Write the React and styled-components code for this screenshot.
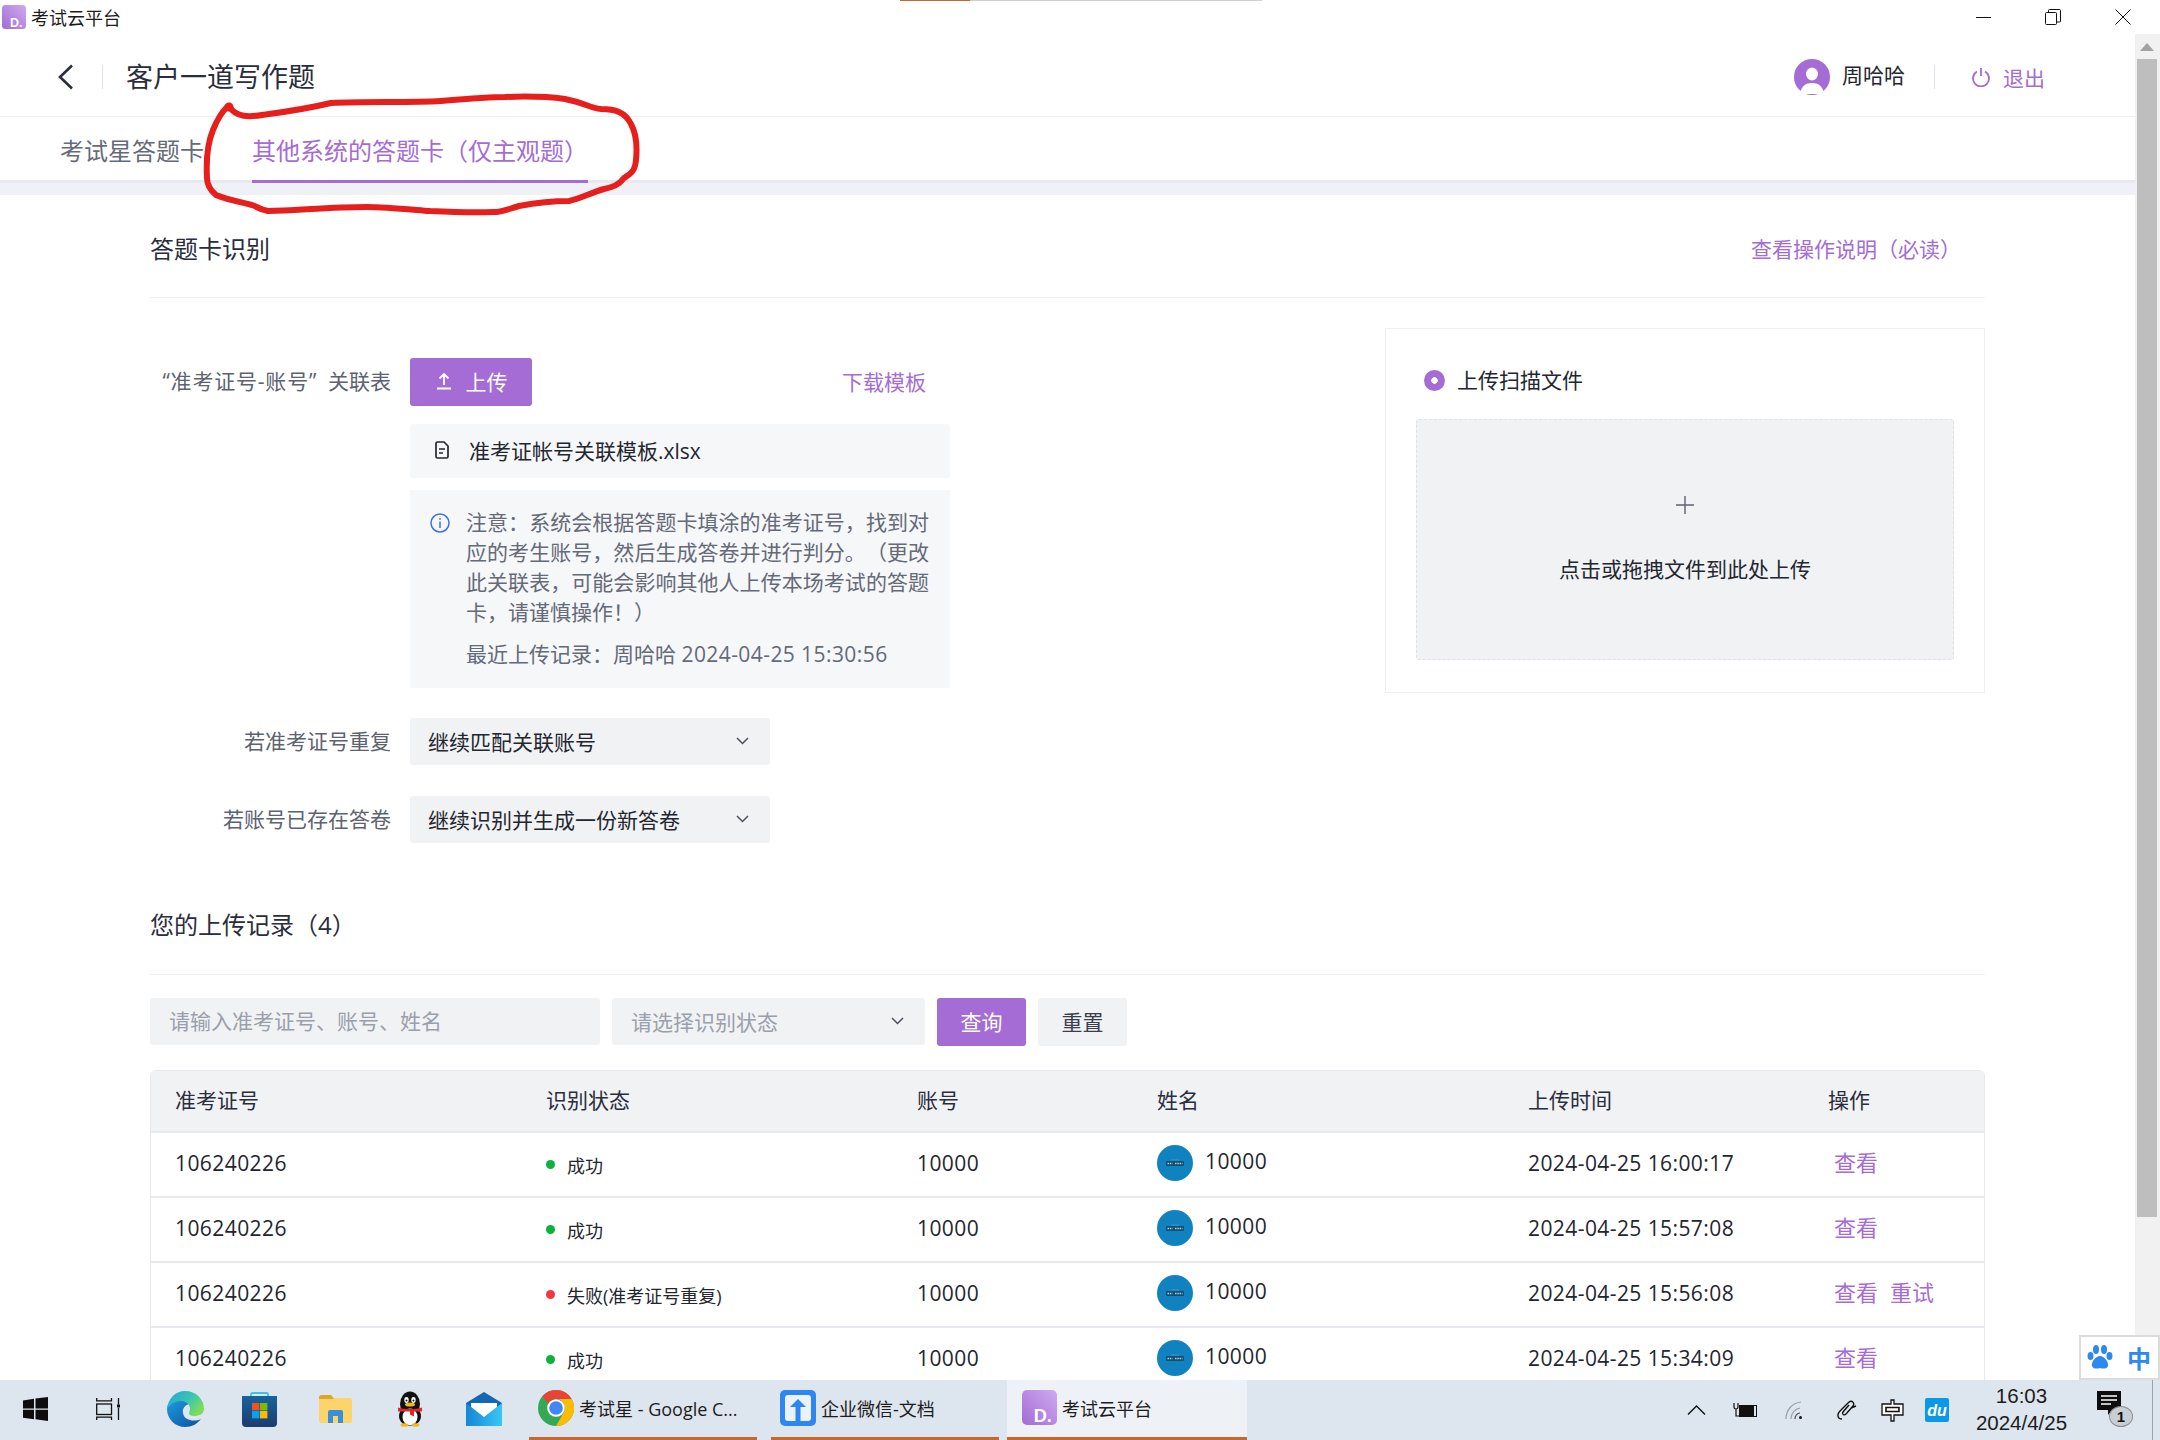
import React from "react";
import styled, { createGlobalStyle } from "styled-components";

const PURPLE = "#a46cd4";
const FONT = `"Open Sans", "Noto Sans CJK SC", sans-serif`;

const Global = createGlobalStyle`
  html, body { margin: 0; padding: 0; background: #fff; overflow: hidden; }
  * { box-sizing: border-box; text-spacing-trim: space-all; }
`;

const Screen = styled.div`
  position: relative; width: 2160px; height: 1440px; overflow: hidden;
  display: flex; flex-direction: column; background: #fff;
  font-family: ${FONT}; font-size: 21px; color: #23262f;
`;
const TitleBar = styled.div`
  height: 34px; flex: none; display: flex; align-items: center; padding-left: 2px; gap: 5px;
  font-size: 18px; color: #1c1c1c; position: relative;
`;
const WinButtons = styled.div`
  margin-left: auto; display: flex; align-items: center; gap: 54px; padding-right: 29px; height: 34px;
`;
const Body = styled.div`flex: 1; min-height: 0; display: flex;`;
const Page = styled.div`flex: 1; min-width: 0; overflow: hidden; display: flex; flex-direction: column;`;
const Scrollbar = styled.div`
  width: 25px; flex: none; background: #f1f1f1; padding: 0 3px 0 2px; display: flex; flex-direction: column;
`;
const ScrollArrow = styled.div`
  height: 25px; display: flex; align-items: center; justify-content: center;
`;
const ScrollThumb = styled.div`height: 1158px; background: #bebebe;`;

const Header = styled.header`
  height: 83px; flex: none; border-bottom: 1px solid #eeeff5; display: flex; align-items: center;
  padding: 3px 90px 0 57px;
`;
const BackBtn = styled.div`width: 17px; height: 26px; display: flex;`;
const VLine = styled.div`width: 1px; height: 24px; background: #dfe1e6;`;
const HeadDivider = styled(VLine)`margin-left: 28px;`;
const PageTitle = styled.h1`
  margin: 0 0 0 23px; font-size: 27px; font-weight: 400; color: #2a2d3c; line-height: 36px;
`;
const UserBox = styled.div`margin-left: auto; display: flex; align-items: center;`;
const UserName = styled.span`margin-left: 12px; margin-bottom: 5px; color: #23262f;`;
const UserDivider = styled(VLine)`margin: 0 37px 0 29px;`;
const Logout = styled.span`display: flex; align-items: center; gap: 13px; color: ${PURPLE};`;

const Tabs = styled.nav`
  height: 66px; flex: none; display: flex; padding-left: 60px; gap: 48px;
  border-bottom: 3px solid #e8e9ee;
`;
const Tab = styled.div`
  height: 66px; font-size: 24px; line-height: 68px; color: ${p => (p.$active ? PURPLE : "#666b78")};
  border-bottom: 3px solid ${p => (p.$active ? PURPLE : "transparent")}; white-space: nowrap;
`;
const Band = styled.div`height: 12px; flex: none; background: #f0f1f7;`;

const Content = styled.main`padding: 0 150px; flex: 1;`;
const SectionHead = styled.div`
  display: flex; align-items: center; justify-content: space-between;
  height: 103px; padding: 6px 24px 0 0; border-bottom: 1px solid #f0f1f5;
`;
const SectionTitle = styled.h2`margin: 0; font-size: 24px; font-weight: 400; color: #2a2d3c; line-height: 32px;`;
const RecordsTitle = styled(SectionTitle)`line-height: 30px;`;
const TextLink = styled.a`color: ${PURPLE}; white-space: nowrap; padding-bottom: 2px;`;

const FormRow = styled.div`display: flex; justify-content: space-between; align-items: flex-start; padding-top: 30px;`;
const Form = styled.div`
  width: 800px; padding-top: 30px; display: grid; grid-template-columns: 241px 540px; column-gap: 19px;
`;
const Label = styled.div`
  text-align: right; color: #5c6270; line-height: ${p => p.$h}px; white-space: nowrap; grid-column: 1;
`;
const Quoted = styled.span`letter-spacing: 0.8px;`;
const FieldTop = styled.div`
  grid-column: 2; display: flex; align-items: center; justify-content: space-between; padding-right: 24px;
`;
const Btn = styled.button`
  height: 48px; width: ${p => p.$w}px; border: 0; border-radius: 3px; padding: 0 0 2px;
  font: inherit; display: flex; align-items: center; justify-content: center; gap: 13px;
  background: ${p => (p.$plain ? "#f1f2f4" : PURPLE)}; color: ${p => (p.$plain ? "#3b3f4c" : "#fff")};
`;
const FileRow = styled.div`
  grid-column: 2; margin-top: 18px; height: 54px; background: #f6f7f9; border-radius: 3px;
  display: flex; align-items: center; padding: 0 0 2px 25px; gap: 20px; color: #23262f;
`;
const Notice = styled.div`
  grid-column: 2; margin-top: 12px; height: 198px; background: #f6f7f9; padding: 17px 18px 0 20px;
  display: flex; gap: 16px; color: #646a78;
`;
const NoticeIcon = styled.div`flex: none; width: 20px; height: 20px; margin-top: 4px;`;
const NoticeText = styled.div`line-height: 30px;`;
const NoticeP = styled.div`text-align: justify; width: 463px;`;
const NoticeLast = styled.div`margin-top: 12px; white-space: nowrap;`;
const Num = styled.span`letter-spacing: 0.42px;`;
const SelectBox = styled.div`
  display: flex; align-items: center; justify-content: space-between; height: 47px; width: ${p => p.$w}px;
  background: #f1f2f4; border-radius: 3px; padding: 0 21px 2px ${p => p.$pl || 18}px;
  color: ${p => (p.$ph ? "#9aa0ab" : "#23262f")};
`;
const FieldSelect = styled.div`grid-column: 2; margin-top: ${p => p.$mt}px;`;
const LabelSpaced = styled(Label)`margin-top: ${p => p.$mt}px;`;

const Card = styled.aside`
  width: 600px; height: 365px; border: 1px solid #eeeff6; padding: 41px 30px 0 30px;
`;
const RadioRow = styled.div`display: flex; align-items: center; gap: 12px; height: 21px; padding-left: 8px;`;
const RadioLabel = styled.span`padding-bottom: 3px;`;
const Radio = styled.span`
  width: 21px; height: 21px; border-radius: 50%; background: radial-gradient(circle, #fff 0 3px, ${PURPLE} 3.6px);
`;
const DropZone = styled.div`
  margin-top: 28px; height: 241px; background: #f1f2f4; border: 1px dashed #dfe1e6; border-radius: 3px;
  display: flex; flex-direction: column; align-items: center; padding-top: 76px; gap: 39px;
`;
const PlusIcon = styled.div`height: 18px; display: flex;`;

const RecordsHead = styled.div`
  margin-top: 67px; height: 65px; border-bottom: 1px solid #f0f1f5; 
`;
const Filter = styled.div`display: flex; gap: 12px; margin-top: 23px; align-items: flex-start;`;
const SearchBox = styled.div`
  width: 450px; height: 47px; background: #f1f2f4; border-radius: 3px; padding-left: 19px;
  line-height: 46px; color: #9aa0ab;
`;

const Table = styled.div`
  margin-top: 24px; border: 1px solid #e8e9ee; border-radius: 6px 6px 0 0; overflow: hidden;
`;
const Row = styled.div`
  display: grid; grid-template-columns: 371px 371px 240px 371px 300px 1fr; padding: 0 0 4px 24px; align-items: center;
  height: ${p => p.$h || 65}px; border-bottom: 2px solid #e8e9ee; background: ${p => (p.$head ? "#f1f2f4" : "#fff")};
  color: ${p => (p.$head ? "#2a2d3c" : "#23262f")};
`;
const Status = styled.div`display: flex; align-items: center; gap: 12px; font-size: 18px; padding-top: 4px;`;
const Dot = styled.i`width: 9px; height: 9px; border-radius: 50%; background: ${p => p.$c};`;
const NameCell = styled.div`display: flex; align-items: center; gap: 12px;`;
const Avatar = styled.div`
  width: 36px; height: 36px; border-radius: 50%; background: #1082c0; display: flex; align-items: center; justify-content: center;
`;
const NameText = styled(Num)`padding-bottom: 4px;`;
const Actions = styled.div`display: flex; gap: 12px; padding: 0 0 3px 6px; color: ${PURPLE}; font-size: 22px;`;

const Taskbar = styled.footer`
  height: 60px; flex: none; background: #dde5ee; display: flex; align-items: stretch; position: relative;
`;
const TbIcon = styled.div`
  width: ${p => p.$w}px; margin-left: ${p => p.$ml}px; display: flex; align-items: center; justify-content: center; flex: none; padding-bottom: 2px;
`;
const TbApp = styled.div`
  width: ${p => p.$w}px; margin-left: ${p => p.$ml}px; flex: none; display: flex; align-items: center; gap: 5px;
  padding: 0 0 2px ${p => p.$pl}px; font-size: 18px; color: #1c1c1c; white-space: nowrap;
  border-bottom: 3px solid #c8672c; background: ${p => (p.$active ? "#eef2f6" : "transparent")};
`;
const Tray = styled.div`margin-left: auto; display: flex; align-items: center; flex: none; padding-right: 7px;`;
const TrayIcon = styled.div`margin-left: ${p => p.$ml}px; display: flex; align-items: center;`;
const Clock = styled.div`
  margin-left: 26px; width: 93px; text-align: center; font-size: 20.5px; line-height: 27px; color: #1c1c1c;
  font-family: "Liberation Sans", sans-serif; padding-bottom: 3px;
`;
const Notify = styled.div`margin-left: 29px; width: 36px; height: 40px; position: relative; margin-top: 2px;`;
const NotifyBadge = styled.span`
  position: absolute; left: 12px; top: 15px; width: 24px; height: 21px; border-radius: 50%; background: #c9ced4;
  border: 1px solid #8b8f94; font: bold 15px/19px "Liberation Sans", sans-serif; text-align: center; color: #111;
`;
const TrayEdge = styled.div`width: 1px; height: 60px; background: #9aa1a9; margin-left: 19px;`;
const Ime = styled.div`
  position: absolute; right: 0; bottom: 60px; width: 81px; height: 45px; background: #fff;
  border: 2px solid #dcdcdc; display: flex; align-items: center; gap: 14px; padding-left: 6px;
  color: #2d89ef; font: bold 24px "Noto Sans CJK SC", sans-serif;
`;
const TopStrip = styled.div`
  position: absolute; top: 0; left: ${p => p.$x}px; width: ${p => p.$w}px; height: 1px; background: ${p => p.$c};
`;
const Scribble = styled.svg`position: absolute; left: 0; top: 0; pointer-events: none;`;
const LogoSvg = styled.svg`overflow: visible; flex: none;`;
const LogoChar = styled.text`font: bold ${p => p.$s}px "Liberation Sans", sans-serif; fill: #fff;`;

function Chevron() {
  return (
    <svg width="13" height="8" viewBox="0 0 13 8" fill="none" stroke="#4b505c" strokeWidth="1.5">
      <path d="M1 1l5.500 5.500L12 1" />
    </svg>
  );
}

const Logo = ({ s = 24, id }) => (
  <LogoSvg width={s} height={s} viewBox="0 0 24 24">
    <defs>
      <linearGradient id={id} x1="1" y1="0" x2="0" y2="1">
        <stop offset="0" stopColor="#cfa9f0" />
        <stop offset="1" stopColor="#a26cd3" />
      </linearGradient>
    </defs>
    <rect width="24" height="24" rx="3.5" fill={`url(#${id})`} />
    <LogoChar $s={12.5} x="8" y="22">D.</LogoChar>
  </LogoSvg>
);

const Penguin = () => (
  <svg width="30" height="36" viewBox="0 0 30 36">
    <ellipse cx="15" cy="13" rx="10" ry="12.5" fill="#111" />
    <ellipse cx="15" cy="25" rx="11" ry="10" fill="#111" />
    <ellipse cx="15" cy="26" rx="7.5" ry="8.5" fill="#fff" />
    <ellipse cx="11.5" cy="9" rx="2.2" ry="3" fill="#fff" /><ellipse cx="18.5" cy="9" rx="2.2" ry="3" fill="#fff" />
    <circle cx="11.5" cy="9.5" r="1" fill="#111" /><circle cx="18.5" cy="9.5" r="1" fill="#111" />
    <ellipse cx="15" cy="13.5" rx="5" ry="2" fill="#f5b81c" />
    <path d="M3 16.500c6 2 18 2 24 0v4H19v5l-4-2v-3H3z" fill="#e0262a" />
    <ellipse cx="9.5" cy="34" rx="4" ry="1.8" fill="#f5b81c" /><ellipse cx="20.5" cy="34" rx="4" ry="1.8" fill="#f5b81c" />
  </svg>
);

const Chrome = () => (
  <svg width="36" height="36" viewBox="0 0 36 36">
    <circle cx="18" cy="18" r="18" fill="#34a853" />
    <path d="M18 0A18 18 0 0 1 33.600 9H18A9 9 0 0 0 10.200 13.500L4.500 6.200A18 18 0 0 1 18 0z" fill="#ea4335" />
    <path d="M33.600 9A18 18 0 0 1 18 36L25.800 22.500A9 9 0 0 0 18 9z" fill="#fbbc05" />
    <circle cx="18" cy="18" r="8.800" fill="#fff" /><circle cx="18" cy="18" r="6.800" fill="#4285f4" />
  </svg>
);

const Edge = () => (
  <svg width="37" height="36" viewBox="0 0 37 36">
    <defs>
      <linearGradient id="edgeBlue" x1="0" y1="0" x2="1" y2="1">
        <stop offset="0" stopColor="#1f9ce0" />
        <stop offset="1" stopColor="#0c4f9e" />
      </linearGradient>
      <linearGradient id="edgeGreen" x1="0" y1="0" x2="1" y2="0.6">
        <stop offset="0" stopColor="#1ea6d8" />
        <stop offset="0.6" stopColor="#3ac6b0" />
        <stop offset="1" stopColor="#7fdc5a" />
      </linearGradient>
    </defs>
    <path d="M14 8C6 9 0 12 0 18c0 10 8 18 18 18 7 0 12-3 16-8-6 3-17 2-18-6-1-5 3-9 7-9z" fill="url(#edgeBlue)" />
    <path d="M18 0c11 0 19 8 19 18 0 5-5 7-10 7-3 0-5-1-5-3 3-6-1-12-8-12-6 0-11 3-14 8C1 8 8 0 18 0z" fill="url(#edgeGreen)" />
  </svg>
);

const rows = [
  { t: "2024-04-25 16:00:17", ok: true },
  { t: "2024-04-25 15:57:08", ok: true },
  { t: "2024-04-25 15:56:08", ok: false },
  { t: "2024-04-25 15:34:09", ok: true },
];

export default function App() {
  return (
    <Screen>
      <Global />
      <TitleBar>
        <Logo id="lg1" />
        <span>考试云平台</span>
        <WinButtons>
          <svg width="15" height="15" viewBox="0 0 15 15"><path d="M0 7.5h15" stroke="#111" /></svg>
          <svg width="16" height="16" viewBox="0 0 16 16" fill="none" stroke="#111"><rect x="0.5" y="3.5" width="11" height="12" rx="1" /><path d="M3.5 3V1.5a1 1 0 0 1 1-1h10a1 1 0 0 1 1 1V12a1 1 0 0 1-1 1H12" /></svg>
          <svg width="16" height="16" viewBox="0 0 16 16"><path d="M0.5 0.5l15 15M15.5 0.5l-15 15" stroke="#111" /></svg>
        </WinButtons>
      </TitleBar>
      <Body>
        <Page>
          <Header>
            <BackBtn>
              <svg width="17" height="26" viewBox="0 0 17 26" fill="none"><path d="M15 1.5L3 13l12 11.5" stroke="#2a2d3c" strokeWidth="2.6" /></svg>
            </BackBtn>
            <HeadDivider />
            <PageTitle>客户一道写作题</PageTitle>
            <UserBox>
              <svg width="36" height="36" viewBox="0 0 36 36">
                <circle cx="18" cy="18" r="18" fill={PURPLE} />
                <ellipse cx="18" cy="15" rx="6" ry="6.5" fill="#fff" />
                <path d="M6 35c1-8 6-11 12-11s11 3 12 11z" fill="#fff" />
              </svg>
              <UserName>周哈哈</UserName>
              <UserDivider />
              <Logout>
                <svg width="18" height="20" viewBox="0 0 18 20" fill="none" stroke={PURPLE} strokeWidth="1.8"><path d="M5 4.5a8 8 0 1 0 8 0M9 1v8" /></svg>
                退出
              </Logout>
            </UserBox>
          </Header>
          <Tabs>
            <Tab>考试星答题卡</Tab>
            <Tab $active>其他系统的答题卡（仅主观题）</Tab>
          </Tabs>
          <Band />
          <Content>
            <SectionHead>
              <SectionTitle>答题卡识别</SectionTitle>
              <TextLink>查看操作说明（必读）</TextLink>
            </SectionHead>
            <FormRow>
              <Form>
                <Label $h={46}><Quoted>“准考证号-账号”</Quoted>&nbsp;&nbsp;关联表</Label>
                <FieldTop>
                  <Btn $w={122}>
                    <svg width="18" height="18" viewBox="0 0 18 18" fill="none" stroke="#fff" strokeWidth="1.8"><path d="M9 13V2M4.5 6.5L9 2l4.5 4.5M2 16.5h14" /></svg>
                    上传
                  </Btn>
                  <TextLink>下载模板</TextLink>
                </FieldTop>
                <FileRow>
                  <svg width="14" height="18" viewBox="0 0 14 18" fill="none" stroke="#23262f" strokeWidth="1.7"><path d="M1 2.5a1.5 1.5 0 0 1 1.5-1.5H9l4 4v10.5a1.5 1.5 0 0 1-1.5 1.5h-9A1.5 1.5 0 0 1 1 15.500z" /><path d="M4 8h6M4 12h4" /></svg>
                  <span>准考证帐号关联模板.xlsx</span>
                </FileRow>
                <Notice>
                  <NoticeIcon>
                    <svg width="20" height="20" viewBox="0 0 20 20" fill="none" stroke="#3f6fe8" strokeWidth="1.5"><circle cx="10" cy="10" r="9" /><path d="M10 8.500v6.500M10 5v1.800" /></svg>
                  </NoticeIcon>
                  <NoticeText>
                    <NoticeP>注意：系统会根据答题卡填涂的准考证号，找到对应的考生账号，然后生成答卷并进行判分。（更改此关联表，可能会影响其他人上传本场考试的答题卡，请谨慎操作！）</NoticeP>
                    <NoticeLast>最近上传记录：周哈哈 <Num>2024-04-25 15:30:56</Num></NoticeLast>
                  </NoticeText>
                </Notice>
                <LabelSpaced $h={47} $mt={30}>若准考证号重复</LabelSpaced>
                <FieldSelect $mt={30}>
                  <SelectBox $w={360}>继续匹配关联账号<Chevron /></SelectBox>
                </FieldSelect>
                <LabelSpaced $h={47} $mt={31}>若账号已存在答卷</LabelSpaced>
                <FieldSelect $mt={31}>
                  <SelectBox $w={360}>继续识别并生成一份新答卷<Chevron /></SelectBox>
                </FieldSelect>
              </Form>
              <Card>
                <RadioRow><Radio /><RadioLabel>上传扫描文件</RadioLabel></RadioRow>
                <DropZone>
                  <PlusIcon>
                    <svg width="18" height="18" viewBox="0 0 18 18"><path d="M9 0v18M0 9h18" stroke="#5c6270" strokeWidth="1.4" /></svg>
                  </PlusIcon>
                  <span>点击或拖拽文件到此处上传</span>
                </DropZone>
              </Card>
            </FormRow>
            <RecordsHead>
              <RecordsTitle>您的上传记录（4）</RecordsTitle>
            </RecordsHead>
            <Filter>
              <SearchBox>请输入准考证号、账号、姓名</SearchBox>
              <SelectBox $w={313} $ph $pl={19}>请选择识别状态<Chevron /></SelectBox>
              <Btn $w={89}>查询</Btn>
              <Btn $w={89} $plain>重置</Btn>
            </Filter>
            <Table>
              <Row $head $h={62}>
                <span>准考证号</span><span>识别状态</span><span>账号</span><span>姓名</span><span>上传时间</span><span>操作</span>
              </Row>
              {rows.map((r) => (
                <Row key={r.t}>
                  <Num>106240226</Num>
                  <Status><Dot $c={r.ok ? "#0db13c" : "#f2383f"} />{r.ok ? "成功" : "失败(准考证号重复)"}</Status>
                  <Num>10000</Num>
                  <NameCell>
                    <Avatar>
                      <svg width="18" height="7" viewBox="0 0 18 7"><path d="M5 1h8" stroke="#4a93bd" /><rect y="2" width="18" height="5" rx="1" fill="#164e70" /><path d="M1.500 4.500h5M9 4.500h7.500" stroke="#a9cfe4" strokeWidth="1.500" strokeDasharray="1.500 .8" /></svg>
                    </Avatar>
                    <NameText>10000</NameText>
                  </NameCell>
                  <Num>{r.t}</Num>
                  <Actions><span>查看</span>{!r.ok && <span>重试</span>}</Actions>
                </Row>
              ))}
            </Table>
          </Content>
        </Page>
        <Scrollbar>
          <ScrollArrow>
            <svg width="14" height="8" viewBox="0 0 14 8"><path d="M7 0l7 8H0z" fill="#a3a3a3" /></svg>
          </ScrollArrow>
          <ScrollThumb />
        </Scrollbar>
      </Body>
      <Taskbar>
        <TbIcon $w={25} $ml={23}>
          <svg width="25" height="24" viewBox="0 0 25 24"><path d="M0 3.500l11-1.700v9.700H0zM12.500 1.500L25 0v11.500H12.500zM0 12.800h11v9.500L0 20.700zM12.500 12.800H25V24l-12.500-1.700z" fill="#0d0d0d" /></svg>
        </TbIcon>
        <TbIcon $w={25} $ml={47}>
          <svg width="24" height="22" viewBox="0 0 24 22" fill="none" stroke="#111" strokeWidth="1.300">
            <path d="M.7 0v3.500M15.500 0v3.500M.7 2.800h14.800M.7 22v-3.500M15.500 22v-3.500M.7 19.200h14.800" />
            <rect x=".7" y="6" width="14.800" height="10.500" />
            <path d="M22.500 0v6.500M22.500 10v12" />
            <rect x="21" y="6.500" width="3" height="3" fill="#111" stroke="none" />
          </svg>
        </TbIcon>
        <TbIcon $w={39} $ml={46}><Edge /></TbIcon>
        <TbIcon $w={35} $ml={37}>
          <svg width="35" height="35" viewBox="0 0 35 35">
            <defs><linearGradient id="storeG" x1="0" y1="0" x2="0" y2="1"><stop offset="0" stopColor="#17639f" /><stop offset="1" stopColor="#1c3c6e" /></linearGradient></defs>
            <path d="M9 6V2.500a1.500 1.500 0 0 1 1.500-1.500h14a1.500 1.500 0 0 1 1.500 1.500V6" fill="none" stroke="#35c3f0" strokeWidth="1.800" />
            <path d="M0 4h35v27a4 4 0 0 1-4 4H4a4 4 0 0 1-4-4z" fill="url(#storeG)" />
            <rect x="10" y="11" width="7.400" height="7.400" fill="#f25022" /><rect x="18" y="11" width="7.400" height="7.400" fill="#7fba00" />
            <rect x="10" y="19" width="7.400" height="7.400" fill="#00a4ef" /><rect x="18" y="19" width="7.400" height="7.400" fill="#ffb900" />
          </svg>
        </TbIcon>
        <TbIcon $w={33} $ml={42}>
          <svg width="33" height="28" viewBox="0 0 33 28">
            <path d="M0 3a3 3 0 0 1 3-3h9l3 3h15a3 3 0 0 1 3 3v19a3 3 0 0 1-3 3H3a3 3 0 0 1-3-3z" fill="#fbd56b" />
            <path d="M0 3a3 3 0 0 1 3-3h9l3 4H0z" fill="#dfa22a" />
            <path d="M9 28V17a2 2 0 0 1 2-2h11a2 2 0 0 1 2 2v11h-5v-7h-5v7z" fill="#3a90d8" />
          </svg>
        </TbIcon>
        <TbIcon $w={30} $ml={43}><Penguin /></TbIcon>
        <TbIcon $w={36} $ml={41}>
          <svg width="36" height="34" viewBox="0 0 36 34">
            <defs><linearGradient id="mailG" x1="0" y1="0" x2="1" y2="0"><stop offset="0" stopColor="#1487d4" /><stop offset="1" stopColor="#3bc6f6" /></linearGradient></defs>
            <path d="M0 11L18 0l18 11v6H0z" fill="#1268b3" />
            <path d="M5 11h26v8L18 26 5 19z" fill="#fff" />
            <path d="M0 11l18 14 18-14v23H0z" fill="url(#mailG)" />
          </svg>
        </TbIcon>
        <TbApp $w={228} $ml={27} $pl={9}><Chrome /><span>考试星 - Google C...</span></TbApp>
        <TbApp $w={228} $ml={14} $pl={9}>
          <svg width="36" height="36" viewBox="0 0 36 36">
            <rect width="36" height="36" rx="5" fill="#2f86ee" />
            <rect x="5" y="5" width="26" height="26" rx="3" fill="#eaf2fe" />
            <path d="M18 9l8 8h-5.500v14h-5V17H10z" fill="#2f86ee" />
          </svg>
          <span>企业微信-文档</span>
        </TbApp>
        <TbApp $w={240} $ml={8} $pl={15} $active><Logo s={35} id="lg2" /><span>考试云平台</span></TbApp>
        <Tray>
          <TrayIcon $ml={0}><svg width="19" height="10" viewBox="0 0 19 10" fill="none" stroke="#111" strokeWidth="1.4"><path d="M1 9.500l8.500-8.500L18 9.500" /></svg></TrayIcon>
          <TrayIcon $ml={27}>
            <svg width="24" height="16" viewBox="0 0 24 16">
              <path d="M1 1v4a2 2 0 0 0 4 0V1M3 7v7h3" fill="none" stroke="#111" strokeWidth="1.200" />
              <rect x="6.500" y="3.500" width="17" height="11" fill="none" stroke="#111" />
              <rect x="7" y="4" width="14" height="10" fill="#111" />
            </svg>
          </TrayIcon>
          <TrayIcon $ml={28}><svg width="18" height="18" viewBox="0 0 18 18" fill="none"><path d="M1 18C1 9 7 2 16 1M6 18c0-6 4-10 9-11" stroke="#9aa0a6" strokeWidth="1.200" /><path d="M10 18c0-3 2-6 5-6" stroke="#555" strokeWidth="1.200" /><circle cx="15.500" cy="16.500" r="1.500" fill="#111" /></svg></TrayIcon>
          <TrayIcon $ml={33}><svg width="21" height="20" viewBox="0 0 21 20" fill="none" stroke="#111" strokeWidth="1.400"><path d="M6 19c-5 0-5-5-2-8l9-9c3-2 6 1 4 4l-7 8c-2 2-4 0-3-2l6-7M15 8l5-2" /></svg></TrayIcon>
          <TrayIcon $ml={24}><svg width="23" height="23" viewBox="0 0 23 23"><path d="M10 1h3v4h9v11h-9v6h-3v-6H1V5h9z" fill="#fff" stroke="#111" strokeWidth="1.300" /><path d="M5 8.500h13v4H5z" fill="none" stroke="#111" strokeWidth="1.600" /></svg></TrayIcon>
          <TrayIcon $ml={21}>
            <svg width="24" height="24" viewBox="0 0 24 24"><rect width="24" height="24" rx="2" fill="#0a99e6" /><text x="12" y="18" textAnchor="middle" fontFamily="Liberation Sans" fontStyle="italic" fontSize="16" fontWeight="bold" fill="#fff">du</text></svg>
          </TrayIcon>
          <Clock>16:03<br />2024/4/25</Clock>
          <Notify>
            <svg width="24" height="28" viewBox="0 0 24 28"><path d="M0 0h24v19h-9l-4 5v-5H0z" fill="#0d0d0d" /><path d="M4 5h16M4 9h16M4 13h10" stroke="#fff" strokeWidth="1.300" /></svg>
            <NotifyBadge>1</NotifyBadge>
          </Notify>
          <TrayEdge />
        </Tray>
      </Taskbar>
      <Ime>
        <svg width="26" height="25" viewBox="0 0 26 25" fill="#2d89ef">
          <ellipse cx="3.500" cy="11" rx="3" ry="4" /><ellipse cx="9" cy="4.500" rx="3" ry="4.500" /><ellipse cx="17" cy="4.500" rx="3" ry="4.500" /><ellipse cx="22.500" cy="11" rx="3" ry="4" />
          <path d="M13 11c4 0 9 6 8 10-1 3-5 3-8 2-3 1-7 1-8-2-1-4 4-10 8-10z" />
        </svg>
        <span>中</span>
      </Ime>
      <TopStrip $x={900} $w={70} $c="#c8672c" />
      <TopStrip $x={970} $w={292} $c="#cfcfcf" />
      <Scribble width="700" height="240" viewBox="0 0 700 240" fill="none">
        <path d="M229 106 C236 118 250 117 262 115 C285 112 310 108 331 103 C365 101 410 103 441 101 C465 99 490 97 505 97 C530 96 550 97 565 99 C585 103 590 108 601 109 C615 109 625 112 631 124 C637 135 637 150 636 160 C635 172 630 174 624 178 C618 186 612 187 604 189 C590 193 580 199 569 201 C555 201 535 203 519 206 C508 209 503 212 494 212 C470 213 450 212 430 211 C405 209 385 207 367 207 C335 207 300 210 268 211 C258 209 258 207 252 205 C240 202 225 199 216 195 C210 190 207 185 207 178 C206 160 208 142 213 130 C217 120 222 112 227 107" stroke="#e71f1c" strokeWidth="6" strokeLinecap="round" strokeLinejoin="round" />
        <circle cx="229" cy="107" r="4.500" fill="#e71f1c" />
      </Scribble>
    </Screen>
  );
}
